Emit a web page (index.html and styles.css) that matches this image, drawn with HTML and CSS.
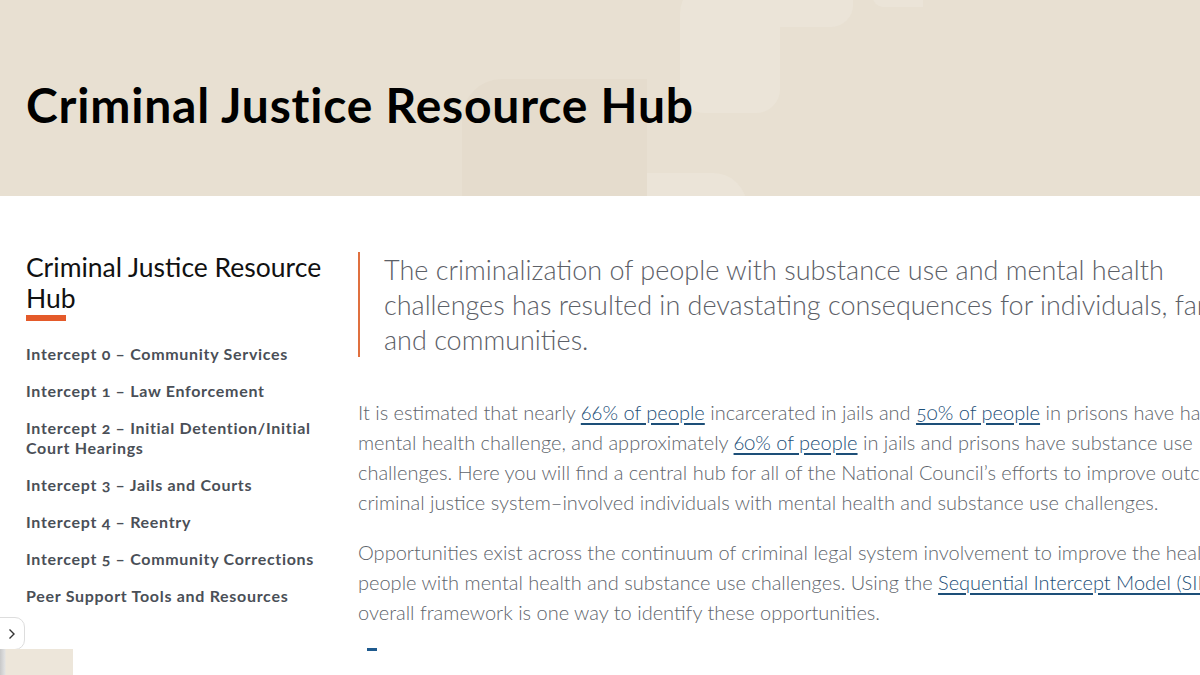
FILE: index.html
```html
<!DOCTYPE html>
<html lang="en">
<head>
<meta charset="utf-8">
<title>Criminal Justice Resource Hub</title>
<link rel="stylesheet" href="styles.css">
</head>
<body>
<header class="hero">
  <div class="hero-shape shape-a"></div>
  <div class="hero-shape shape-b"></div>
  <div class="hero-shape shape-c"></div>
  <div class="hero-shape shape-d"></div>
  <div class="hero-shape shape-e"></div>
  <h1 class="hero-title">Criminal Justice Resource Hub</h1>
</header>
<div class="layout">
  <aside class="sidebar">
    <h2 class="sidebar-title">Criminal Justice Resource Hub</h2>
    <span class="sidebar-rule"></span>
    <nav class="sidebar-nav">
      <a href="#">Intercept 0 – Community Services</a>
      <a href="#">Intercept 1 – Law Enforcement</a>
      <a href="#">Intercept 2 – Initial Detention/Initial Court Hearings</a>
      <a href="#">Intercept 3 – Jails and Courts</a>
      <a href="#">Intercept 4 – Reentry</a>
      <a href="#">Intercept 5 – Community Corrections</a>
      <a href="#">Peer Support Tools and Resources</a>
    </nav>
  </aside>
  <main class="main">
    <blockquote class="lead">The criminalization of people with substance use and mental health challenges has resulted in devastating consequences for individuals, families and communities.</blockquote>
    <p class="body-text">It is estimated that nearly <a href="#">66% of people</a> incarcerated in jails and <a href="#">50% of people</a> in prisons have had a mental health challenge, and approximately <a href="#">60% of people</a> in jails and prisons have substance use challenges. Here you will find a central hub for all of the National Council’s efforts to improve outcomes for criminal justice system–involved individuals with mental health and substance use challenges.</p>
    <p class="body-text">Opportunities exist across the continuum of criminal legal system involvement to improve the health of people with mental health and substance use challenges. Using the <a href="#">Sequential Intercept Model (SIM)</a> as an overall framework is one way to identify these opportunities.</p>
    <span class="section-mark"></span>
  </main>
</div>
<button class="side-toggle" aria-label="Open">
  <svg width="8" height="12" viewBox="0 0 8 12"><path d="M1.5 1.5 L6 6 L1.5 10.5" fill="none" stroke="#333" stroke-width="1.4"/></svg>
</button>
<div class="corner-card"></div>
</body>
</html>
```
FILE: styles.css
```css
html, body {
  margin: 0;
  padding: 0;
  overflow: hidden;
  background: #fff;
}
body {
  font-family: Lato, "Liberation Sans", sans-serif;
  font-variant-numeric: oldstyle-nums;
  color: #222;
  width: 1200px;
  height: 675px;
  position: relative;
}
.hero {
  position: relative;
  height: 196px;
  background: #e8e0d2;
  overflow: hidden;
  display: flex;
  align-items: flex-start;
}
.hero-title {
  position: relative;
  margin: 76px 0 0 26px;
  font-size: 48px;
  line-height: 58px;
  font-weight: 700;
  color: #000;
  letter-spacing: 0.8px;
}
.hero-shape {
  position: absolute;
}
.shape-a {
  left: 680px; top: -20px; width: 100px; height: 133px;
  background: #ebe4d8;
  border-radius: 34px 0 24px 24px;
}
.shape-b {
  left: 780px; top: -10px; width: 73px; height: 37px;
  background: #ebe4d8;
  border-radius: 0 0 22px 0;
}
.shape-c {
  left: 873px; top: -10px; width: 50px; height: 17px;
  background: #ebe4d8;
  border-radius: 0 0 0 10px;
}
.shape-d {
  left: 462px; top: 79px; width: 185px; height: 140px;
  background: #e5dccd;
  border-radius: 40px 0 0 0;
}
.shape-e {
  left: 647px; top: 173px; width: 100px; height: 40px;
  background: #ebe4d8;
  border-radius: 0 34px 0 0;
}
.layout {
  display: flex;
  padding: 56px 0 0 26px;
  gap: 32px;
}
.sidebar {
  width: 300px;
  flex: 0 0 300px;
}
.sidebar-title {
  margin: 0;
  font-size: 26.5px;
  line-height: 31px;
  font-weight: 400;
  color: #111;
}
.sidebar-rule {
  display: block;
  width: 40px;
  height: 6px;
  margin-top: 1px;
  background: #e45a2a;
}
.sidebar-nav {
  display: flex;
  flex-direction: column;
  gap: 17px;
  margin-top: 23px;
}
.sidebar-nav a {
  font-size: 16px;
  line-height: 20px;
  font-weight: 700;
  color: #4a4f57;
  text-decoration: none;
  letter-spacing: 0.7px;
}
.main {
  flex: 0 0 920px;
  width: 920px;
}
.lead {
  margin: 0 -10px 0 0;
  padding-left: 24px;
  border-left: 2px solid #e0703f;
  font-size: 27px;
  line-height: 35px;
  font-weight: 300;
  color: #5c6067;
}
.body-text {
  margin: 40px 0 0;
  font-size: 20px;
  line-height: 30px;
  font-weight: 300;
  color: #60656c;
}
.body-text + .body-text {
  margin-top: 20px;
}
.body-text a {
  color: #1d4f78;
  font-weight: inherit;
  text-decoration: underline;
  text-underline-offset: 3px;
}
.section-mark {
  display: block;
  width: 10px;
  height: 3px;
  margin: 21px 0 0 9px;
  background: #1e5a8e;
}
.side-toggle {
  position: absolute;
  left: -1px;
  top: 617px;
  width: 26px;
  height: 33px;
  padding: 0;
  background: #fff;
  border: 1px solid #ddd;
  border-radius: 0 10px 10px 0;
  display: flex;
  align-items: center;
  justify-content: center;
}
.corner-card {
  position: absolute;
  left: 0;
  top: 649px;
  width: 73px;
  height: 26px;
  background: linear-gradient(90deg, #c8c8c8 0, #e2e2e2 5px, #ede6da 6px);
}
```
